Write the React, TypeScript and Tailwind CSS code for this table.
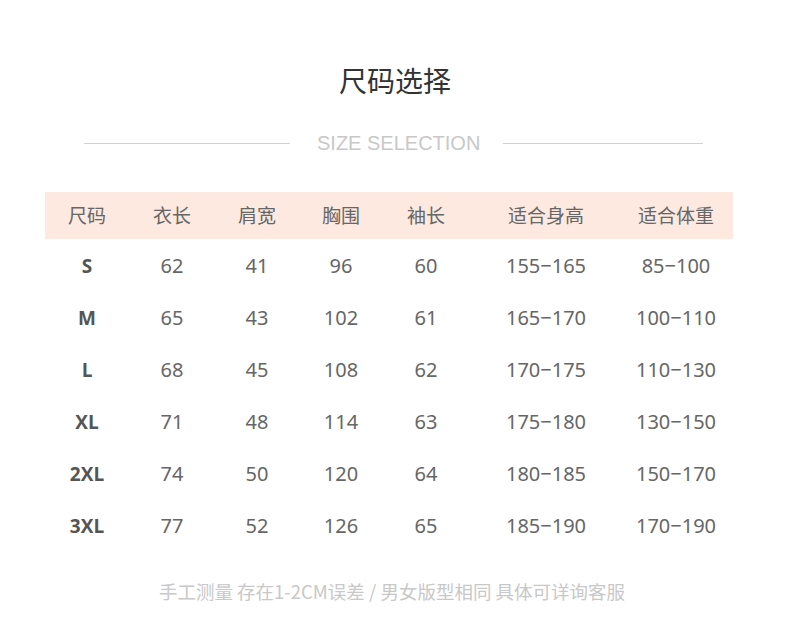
import React from "react";

const rows = [
  ["S", "62", "41", "96", "60", "155−165", "85−100"],
  ["M", "65", "43", "102", "61", "165−170", "100−110"],
  ["L", "68", "45", "108", "62", "170−175", "110−130"],
  ["XL", "71", "48", "114", "63", "175−180", "130−150"],
  ["2XL", "74", "50", "120", "64", "180−185", "150−170"],
  ["3XL", "77", "52", "126", "65", "185−190", "170−190"],
];

const headers = ["尺码", "衣长", "肩宽", "胸围", "袖长", "适合身高", "适合体重"];

const cjk = { fontFamily: '"Noto Sans CJK SC", "Noto Sans", sans-serif' };
const num = { fontFamily: '"Noto Sans", "Noto Sans CJK SC", sans-serif' };
const bold = { fontFamily: '"Open Sans", "Noto Sans", sans-serif' };

export default function App() {
  return (
    <div className="w-[790px] h-[636px] bg-white overflow-hidden pt-[60px]">
      <div
        className="h-[40px] leading-[40px] text-center text-[28px] text-[#333]"
        style={cjk}
      >
        尺码选择
      </div>
      <div className="mt-[31px] h-[24px] flex items-center pl-[84px]">
        <div className="w-[206px] h-px bg-[#d2d2d2]" />
        <div
          className="ml-[27px] mr-[23px] text-[20px] leading-[24px] text-[#c8c8c8]"
          style={{ fontFamily: '"Liberation Sans", Arial, sans-serif' }}
        >
          SIZE SELECTION
        </div>
        <div className="w-[200px] h-px bg-[#d2d2d2]" />
      </div>
      <div className="mt-[37px] ml-[45px] w-[688px]">
        <div className="grid grid-cols-[84px_86px_84px_84px_86px_154px_106px] h-[47px] items-center bg-[#fde9df] pr-[4px]">
          {headers.map((h) => (
            <div
              key={h}
              className="text-center text-[19px] text-[#666]"
              style={cjk}
            >
              {h}
            </div>
          ))}
        </div>
        {rows.map((r) => (
          <div
            key={r[0]}
            className="grid grid-cols-[84px_86px_84px_84px_86px_154px_106px] h-[52px] items-center pr-[4px] pt-[2px]"
          >
            {r.map((c, i) =>
              i === 0 ? (
                <div
                  key={i}
                  className="text-center text-[19px] font-bold text-[#555]"
                  style={bold}
                >
                  {c}
                </div>
              ) : (
                <div
                  key={i}
                  className="text-center text-[20px] text-[#666]"
                  style={num}
                >
                  {c}
                </div>
              )
            )}
          </div>
        ))}
      </div>
      <div
        className="mt-[28px] h-[24px] leading-[24px] text-center text-[18.5px] text-[#c8c8c8] pr-[6px]"
        style={cjk}
      >
        手工测量 存在1-2CM误差 / 男女版型相同 具体可详询客服
      </div>
    </div>
  );
}
